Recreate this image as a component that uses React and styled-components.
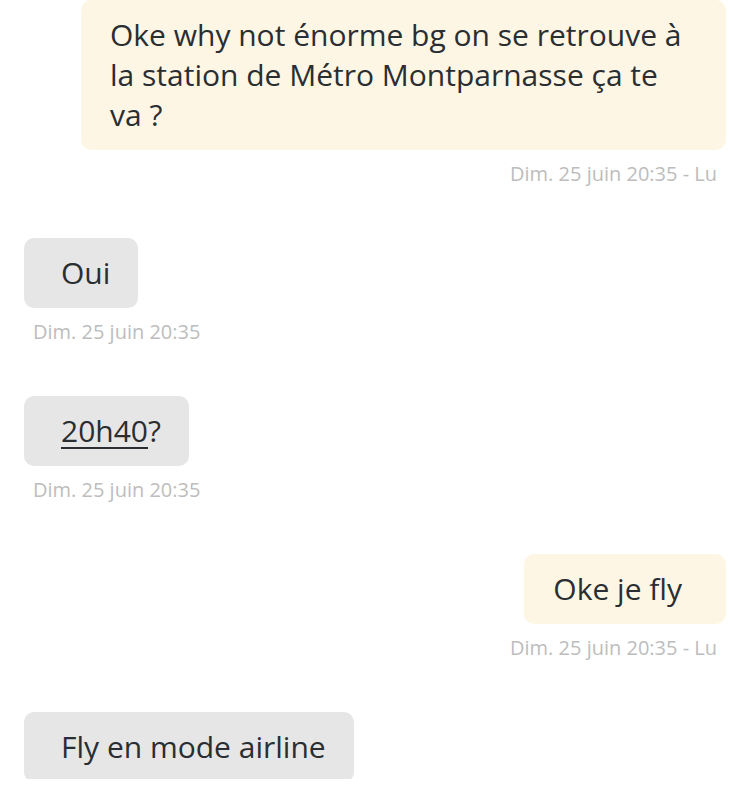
import React from "react";
import styled, { createGlobalStyle } from "styled-components";

const Global = createGlobalStyle`
  html, body { margin: 0; padding: 0; background: #ffffff; }
  body { font-family: "Open Sans", "Noto Sans", sans-serif; }
`;

const Page = styled.div`
  width: 750px;
  height: 779px;
  overflow: hidden;
  background: #ffffff;
  display: flex;
  flex-direction: column;
  padding: 0 24px;
  box-sizing: border-box;
`;

const Group = styled.div`
  display: flex;
  flex-direction: column;
  align-items: ${(p) => (p.$mine ? "flex-end" : "flex-start")};
  margin-top: ${(p) => (p.$first ? "0" : "51px")};
`;

const Bubble = styled.div`
  box-sizing: border-box;
  max-width: 645px;
  padding: 15px ${(p) => (p.$mine ? "44px" : "28px")} 15px
    ${(p) => (p.$mine ? "29px" : "37px")};
  border-radius: 10px;
  background: ${(p) => (p.$mine ? "#fdf6e4" : "#e6e6e6")};
  color: #2a2e32;
  font-size: 30px;
  line-height: 40px;
`;

const Link = styled.span`
  text-decoration: underline;
  text-decoration-thickness: 2px;
  text-underline-offset: 5px;
`;

const Stamp = styled.div`
  margin-top: 11px;
  padding: 0 9px;
  height: 26px;
  line-height: 26px;
  font-size: 20px;
  color: #bdbdbd;
`;

const messages = [
  {
    mine: true,
    text: "Oke why not énorme bg on se retrouve à la station de Métro Montparnasse ça te va ?",
    stamp: "Dim. 25 juin 20:35 - Lu",
  },
  { mine: false, text: "Oui", stamp: "Dim. 25 juin 20:35" },
  { mine: false, link: "20h40", text: "?", stamp: "Dim. 25 juin 20:35" },
  { mine: true, text: "Oke je fly", stamp: "Dim. 25 juin 20:35 - Lu" },
  { mine: false, text: "Fly en mode airline" },
];

export default function App() {
  return (
    <>
      <Global />
      <Page>
        {messages.map((m, i) => (
          <Group key={i} $mine={m.mine} $first={i === 0}>
            <Bubble $mine={m.mine}>
              {m.link && <Link>{m.link}</Link>}
              {m.text}
            </Bubble>
            {m.stamp && <Stamp>{m.stamp}</Stamp>}
          </Group>
        ))}
      </Page>
    </>
  );
}
